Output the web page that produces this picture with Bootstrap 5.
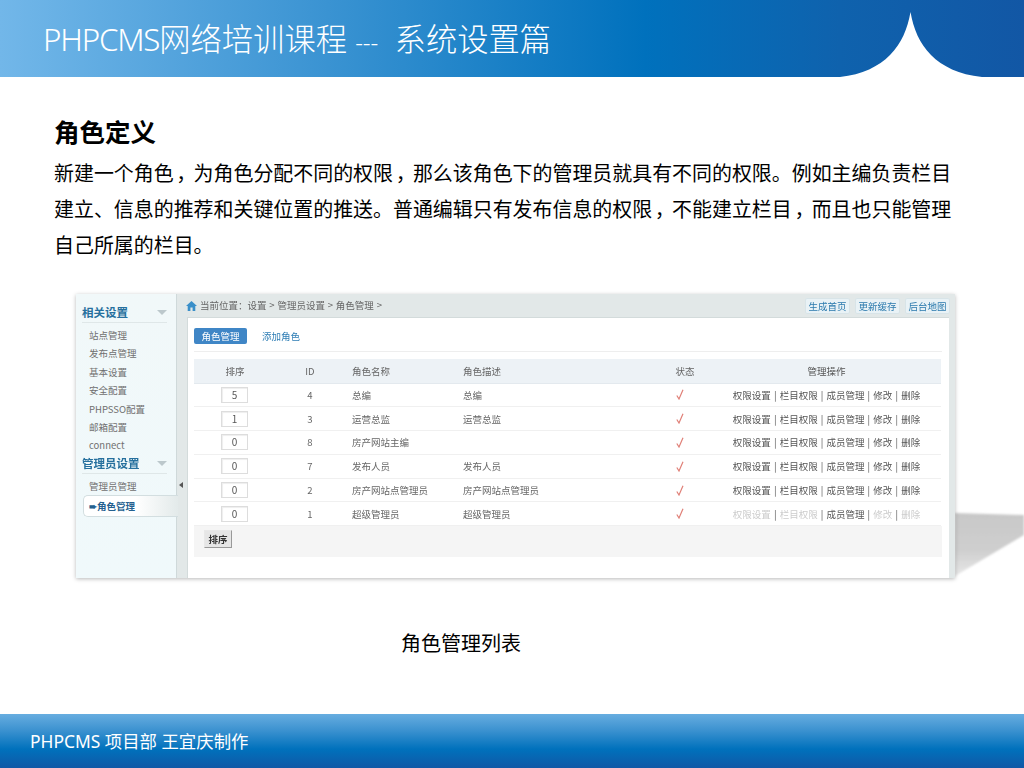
<!DOCTYPE html>
<html lang="zh">
<head>
<meta charset="utf-8">
<title>PHPCMS 系统设置篇</title>
<link href="https://cdn.jsdelivr.net/npm/bootstrap@5.3.0/dist/css/bootstrap.min.css" rel="stylesheet">
<style>
html,body{height:768px;overflow:hidden}
body{font-family:"Noto Sans","Noto Sans CJK SC",sans-serif;color:#000;background:#fff}
.slide{height:768px;position:relative}
.slide-head{height:77px;background:linear-gradient(90deg,#72b7e9 0,#3a93d2 32%,#0071bd 63%,#0f62ad 82%,#1257a5 100%);padding:3px 0 0 43px}
.slide-title{font-size:31.3px;line-height:1;color:#fff;font-weight:300;font-family:"Noto Sans","Noto Sans CJK SC",sans-serif;margin:0;white-space:pre}
.tight{letter-spacing:-1.2px}
.dashes{font-size:24px}
.head-curve{position:absolute;left:0;top:0;pointer-events:none}
.slide-body{padding:39px 0 0 54px}
.topic{font-size:25.5px;line-height:30px;font-weight:700;margin:0 0 9px;font-family:"Noto Sans CJK SC",sans-serif}
.para{font-size:19.95px;line-height:36px;margin:0 0 31px;white-space:nowrap;font-family:"Noto Sans CJK SC",sans-serif}
.cm{display:inline-block;width:1em;text-align:center;line-height:1;font-feature-settings:"palt";padding-right:.1em}
.shot-wrap{position:relative;margin-left:22px;width:879px;height:284px}
.shadow-art{position:absolute;left:879px;top:214px}
.shot{width:879px;height:284px;background:#e2e8e8;box-shadow:0 1px 4px rgba(0,0,0,.28);font-family:"Noto Sans CJK SC",sans-serif;font-size:9.5px;color:#666;filter:blur(.3px);position:relative}
.side{width:101px;background:linear-gradient(180deg,#f1f8f9,#f0f9fb);border-right:1px solid #cfd9da;padding:9px 0 0 6px}
.side-title{font-size:11.5px;font-weight:700;color:#26709e;line-height:18px;width:85px;border-bottom:1px solid #dfe7e8;height:20px;position:relative}
.side-title::after{content:"";position:absolute;right:0;top:7px;border:5px solid transparent;border-top:5px solid #bcc8cc;border-bottom:0}
.side-item{padding-left:7px;line-height:18.4px;height:18.4px;color:#707070}
.side-list{padding-top:3px;margin-bottom:-1px}
.side-on{width:95px;margin-left:1px;height:22px;background:linear-gradient(90deg,#fff 55%,#e3eaea);border:1px solid #d3dee0;border-right:0;border-radius:5px 0 0 5px;line-height:20px;padding-left:5px;font-weight:700;color:#24608f;margin-top:1px}
.rail{width:10px;position:relative}
.rail-arrow{position:absolute;left:2px;top:188px;border:3px solid transparent;border-right:4px solid #555;border-left:0}
.main-col{width:768px}
.crumbs{height:23px;padding:0 5px 0 0;color:#666}
.crumb-text{word-spacing:.7px}
.crumb-icon{margin-left:-1px;margin-right:3px}
.quick{width:45px;height:16px;line-height:14px;background:#e9f2f6;border:1px solid #d8e4e8;color:#2b7aad;font-size:9.5px;border-radius:2px;white-space:nowrap;text-align:center}
.quick-row{gap:5px}
.panel{width:762px;height:261px;background:#fff;border-top:1px solid #d3dbdb;border-left:1px solid #d3dbdb;padding:10px 7px 0 6px}
.tab-on{background:#3f86c6;color:#fff;width:53px;height:16px;line-height:16px;text-align:center;border-radius:2px}
.tab-off{color:#2f7eb5;margin-left:15px;line-height:16px}
.tab-row{height:24px;border-bottom:1px solid #eee;margin-bottom:7px}
.grid-table{table-layout:fixed;width:747px;margin:0;color:#666;font-size:9.5px}
.grid-table th,.grid-table td{padding:0;height:23.8px;vertical-align:middle;border-bottom:1px solid #f0f0f0;font-weight:400;box-shadow:none;background:transparent;color:#666}
.grid-table thead th{background:#edf2f6;height:24px;border-bottom:1px solid #e3e9ee}
.sort-box{width:27px;height:16px;border:1px solid #ddd;box-shadow:inset 1px 1px 1px #eee;font-size:10px;line-height:14px;text-align:center;display:inline-block;margin-right:-1px;color:#555;position:relative;left:-1px}
.tick-icon{display:inline-block;vertical-align:middle;margin:0 10px 2px 0}
.cell-name{padding-left:8px!important}
.grid-table .ops{padding-right:8px;color:#555;white-space:nowrap;word-spacing:1px}
.off{color:#ccc}
.grid-foot{height:31px;background:#f5f5f5;padding:4px 0 0 10px}
.sort-btn{width:28px;height:18px;background:#e6e6e6;border:1px solid #ccc;border-color:#e8e8e8 #999 #999 #e8e8e8;font-weight:700;color:#333;line-height:16px;text-align:center}
.caption-line{width:814px;text-align:center;font-size:20px;line-height:30px;margin-top:50px;font-family:"Noto Sans CJK SC",sans-serif}
.slide-foot{position:absolute;left:0;right:0;bottom:0;height:54px;padding-left:30px;background:linear-gradient(180deg,#67ade0 0,#3c92d0 30%,#0071bc 65%,#1158a6 100%);color:#fff;font-size:17.4px}
</style>
</head>
<body>
<div class="slide">
  <header class="slide-head d-flex align-items-center">
    <h1 class="slide-title"><span class="tight">PHPCMS</span>网络培训课程 <span class="dashes">---</span>  系统设置篇</h1>
  </header>
  <svg class="head-curve" width="1024" height="78" viewBox="0 0 1024 78"><path d="M840 77C885 72 905 45 910.5 12C916 45 936 72 982 77Z" fill="#fff"/></svg>

  <main class="slide-body">
    <h2 class="topic">角色定义</h2>
    <p class="para">新建一个角色<span class="cm">，</span>为角色分配不同的权限<span class="cm">，</span>那么该角色下的管理员就具有不同的权限。例如主编负责栏目<br>建立、信息的推荐和关键位置的推送。普通编辑只有发布信息的权限<span class="cm">，</span>不能建立栏目<span class="cm">，</span>而且也只能管理<br>自己所属的栏目。</p>

    <div class="shot-wrap">
      <svg class="shadow-art" width="69" height="72" viewBox="0 0 69 72"><defs><filter id="sb" x="-10%" y="-10%" width="120%" height="120%"><feGaussianBlur stdDeviation="1"/></filter><linearGradient id="sg" x1="0" y1="0" x2="0" y2="1"><stop offset="0" stop-color="#c8c8c8"/><stop offset=".6" stop-color="#cfcfcf"/><stop offset="1" stop-color="#e8e8e8"/></linearGradient></defs><polygon points="0,5 69,7 69,27 0,68" fill="url(#sg)" filter="url(#sb)"/></svg>
      <div class="shot d-flex">
        <aside class="side">
          <div class="side-title">相关设置</div>
          <div class="side-list">
            <div class="side-item">站点管理</div>
            <div class="side-item">发布点管理</div>
            <div class="side-item">基本设置</div>
            <div class="side-item">安全配置</div>
            <div class="side-item">PHPSSO配置</div>
            <div class="side-item">邮箱配置</div>
            <div class="side-item">connect</div>
          </div>
          <div class="side-title">管理员设置</div>
          <div class="side-list">
            <div class="side-item">管理员管理</div>
          </div>
          <div class="side-on">➨角色管理</div>
        </aside>
        <div class="rail"><span class="rail-arrow"></span></div>
        <div class="main-col d-flex flex-column">
          <div class="crumbs d-flex align-items-center">
            <svg width="11" height="10" viewBox="0 0 11 10" class="crumb-icon"><path d="M5.5 0L11 5H9.3V10H6.6V6.6H4.4V10H1.7V5H0Z" fill="#3a8fc9"/></svg>
            <span class="crumb-text">当前位置：设置 &gt; 管理员设置 &gt; 角色管理 &gt;</span>
            <div class="d-flex quick-row ms-auto">
              <span class="quick">生成首页</span><span class="quick">更新缓存</span><span class="quick">后台地图</span>
            </div>
          </div>
          <div class="panel">
            <div class="tab-row d-flex align-items-start"><span class="tab-on">角色管理</span><span class="tab-off">添加角色</span></div>
            <table class="table grid-table">
              <colgroup><col style="width:82px"><col style="width:68px"><col style="width:111px"><col style="width:195px"><col style="width:70px"><col></colgroup>
              <thead><tr><th class="text-center">排序</th><th class="text-center">ID</th><th class="cell-name">角色名称</th><th class="cell-name">角色描述</th><th class="text-center">状态</th><th class="text-center ops">管理操作</th></tr></thead>
              <tbody>
                <tr><td class="text-center"><span class="sort-box">5</span></td><td class="text-center">4</td><td class="cell-name">总编</td><td class="cell-name">总编</td><td class="text-center"><svg class="tick-icon" width="8" height="11" viewBox="0 0 8 11"><path d="M.8 6.5L3 10L7 .8" fill="none" stroke="#e08078" stroke-width="1.2"/></svg></td><td class="text-center ops">权限设置 | 栏目权限 | 成员管理 | 修改 | 删除</td></tr>
                <tr><td class="text-center"><span class="sort-box">1</span></td><td class="text-center">3</td><td class="cell-name">运营总监</td><td class="cell-name">运营总监</td><td class="text-center"><svg class="tick-icon" width="8" height="11" viewBox="0 0 8 11"><path d="M.8 6.5L3 10L7 .8" fill="none" stroke="#e08078" stroke-width="1.2"/></svg></td><td class="text-center ops">权限设置 | 栏目权限 | 成员管理 | 修改 | 删除</td></tr>
                <tr><td class="text-center"><span class="sort-box">0</span></td><td class="text-center">8</td><td class="cell-name">房产网站主编</td><td class="cell-name"></td><td class="text-center"><svg class="tick-icon" width="8" height="11" viewBox="0 0 8 11"><path d="M.8 6.5L3 10L7 .8" fill="none" stroke="#e08078" stroke-width="1.2"/></svg></td><td class="text-center ops">权限设置 | 栏目权限 | 成员管理 | 修改 | 删除</td></tr>
                <tr><td class="text-center"><span class="sort-box">0</span></td><td class="text-center">7</td><td class="cell-name">发布人员</td><td class="cell-name">发布人员</td><td class="text-center"><svg class="tick-icon" width="8" height="11" viewBox="0 0 8 11"><path d="M.8 6.5L3 10L7 .8" fill="none" stroke="#e08078" stroke-width="1.2"/></svg></td><td class="text-center ops">权限设置 | 栏目权限 | 成员管理 | 修改 | 删除</td></tr>
                <tr><td class="text-center"><span class="sort-box">0</span></td><td class="text-center">2</td><td class="cell-name">房产网站点管理员</td><td class="cell-name">房产网站点管理员</td><td class="text-center"><svg class="tick-icon" width="8" height="11" viewBox="0 0 8 11"><path d="M.8 6.5L3 10L7 .8" fill="none" stroke="#e08078" stroke-width="1.2"/></svg></td><td class="text-center ops">权限设置 | 栏目权限 | 成员管理 | 修改 | 删除</td></tr>
                <tr><td class="text-center"><span class="sort-box">0</span></td><td class="text-center">1</td><td class="cell-name">超级管理员</td><td class="cell-name">超级管理员</td><td class="text-center"><svg class="tick-icon" width="8" height="11" viewBox="0 0 8 11"><path d="M.8 6.5L3 10L7 .8" fill="none" stroke="#e08078" stroke-width="1.2"/></svg></td><td class="text-center ops"><span class="off">权限设置</span> | <span class="off">栏目权限</span> | 成员管理 | <span class="off">修改</span> | <span class="off">删除</span></td></tr>
              </tbody>
            </table>
            <div class="grid-foot"><div class="sort-btn">排序</div></div>
          </div>
        </div>
      </div>
    </div>
    <div class="caption-line">角色管理列表</div>
  </main>

  <footer class="slide-foot d-flex align-items-center">PHPCMS 项目部 王宜庆制作</footer>
</div>
<script src="https://cdn.jsdelivr.net/npm/bootstrap@5.3.0/dist/js/bootstrap.bundle.min.js"></script>
</body>
</html>
